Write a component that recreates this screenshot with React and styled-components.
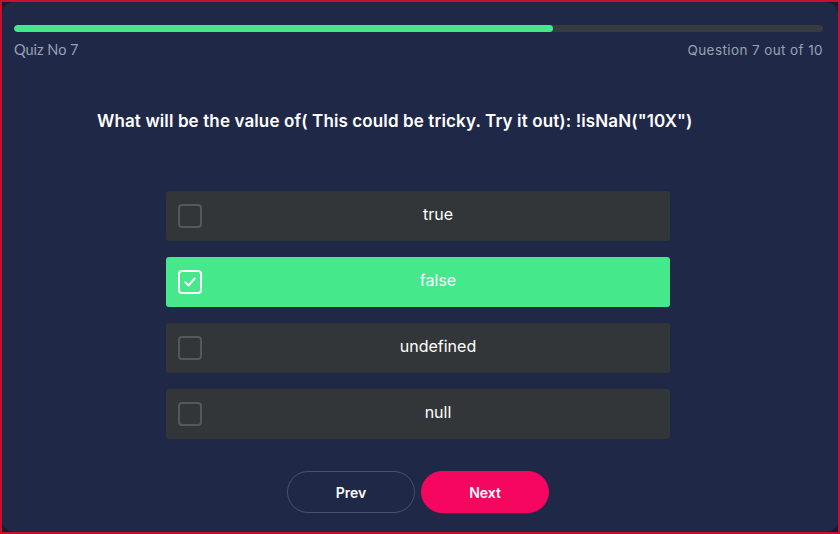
import React, { useState } from "react";
import styled, { createGlobalStyle } from "styled-components";

const Global = createGlobalStyle`
  html, body { margin: 0; padding: 0; background: #1a1c3d; }
  * { box-sizing: border-box; }
  body { font-family: "Inter", "Open Sans", sans-serif; }
`;

const Frame = styled.div`
  width: 840px;
  height: 534px;
  border: 2px solid #c8102e;
  background: #171a3a;
  display: flex;
`;

const Card = styled.div`
  flex: 1;
  background: #1f2847;
  border-radius: 12px;
  padding: 23px 16px 0 12px;
  display: flex;
  flex-direction: column;
`;

const Track = styled.div`
  height: 7px;
  margin-right: -1px;
  border-radius: 4px;
  background: #363b40;
  overflow: hidden;
`;

const Fill = styled.div`
  height: 100%;
  border-radius: 4px;
  background: #44e78b;
`;

const MetaRow = styled.div`
  margin-top: 8px;
  display: flex;
  justify-content: space-between;
  line-height: 20px;
  font-size: 14px;
  color: #9aa1b5;
`;

const QuizNo = styled.span`
  font-family: "Lato", sans-serif;
  font-size: 14.5px;
`;

const Count = styled.span`
  font-family: "Inter", sans-serif;
  font-size: 13.5px;
  letter-spacing: 0.4px;
  margin-right: -1px;
`;

const Question = styled.h2`
  margin: 49px 0 0 83px;
  font-size: 17px;
  line-height: 24px;
  font-weight: 600;
  color: #ffffff;
  letter-spacing: 0.12px;
`;

const Options = styled.div`
  margin: 58px auto 0;
  width: 504px;
  display: flex;
  flex-direction: column;
  gap: 16px;
`;

const Option = styled.div`
  height: 50px;
  border-radius: 3px;
  background: ${(p) => (p.$selected ? "#45e88b" : "#333638")};
  display: flex;
  align-items: center;
  padding-left: 12px;
  cursor: pointer;
`;

const Box = styled.div`
  width: 24px;
  height: 24px;
  border-radius: 4px;
  border: 2px solid ${(p) => (p.$selected ? "#ffffff" : "#55585b")};
  display: flex;
  align-items: center;
  justify-content: center;
`;

const Label = styled.div`
  flex: 1;
  text-align: center;
  font-size: 16px;
  color: #ffffff;
  padding: 0 0 4px 4px;
`;

const Buttons = styled.div`
  margin-top: 32px;
  display: flex;
  justify-content: center;
  gap: 6px;
`;

const Button = styled.button`
  width: 128px;
  height: 42px;
  border-radius: 21px;
  font-family: "Inter", sans-serif;
  font-size: 14px;
  font-weight: 600;
  color: #ffffff;
  cursor: pointer;
  border: 1px solid ${(p) => (p.$primary ? "#f5065f" : "#4a5168")};
  background: ${(p) => (p.$primary ? "#f5065f" : "transparent")};
`;

const options = ["true", "false", "undefined", "null"];

export default function App() {
  const [sel, setSel] = useState(1);
  return (
    <>
      <Global />
      <Frame>
        <Card>
          <Track>
            <Fill style={{ width: "66.6%" }} />
          </Track>
          <MetaRow>
            <QuizNo>Quiz No 7</QuizNo>
            <Count>Question 7 out of 10</Count>
          </MetaRow>
          <Question>
            What will be the value of( This could be tricky. Try it out): !isNaN("10X")
          </Question>
          <Options>
            {options.map((o, i) => (
              <Option key={o} $selected={sel === i} onClick={() => setSel(i)}>
                <Box $selected={sel === i}>
                  {sel === i && (
                    <svg width="14" height="14" viewBox="0 0 24 24" fill="none" stroke="#fff" strokeWidth="3.5" strokeLinecap="round" strokeLinejoin="round">
                      <polyline points="4 12.5 9.5 18 20 6" />
                    </svg>
                  )}
                </Box>
                <Label>{o}</Label>
              </Option>
            ))}
          </Options>
          <Buttons>
            <Button>Prev</Button>
            <Button $primary>Next</Button>
          </Buttons>
        </Card>
      </Frame>
    </>
  );
}
